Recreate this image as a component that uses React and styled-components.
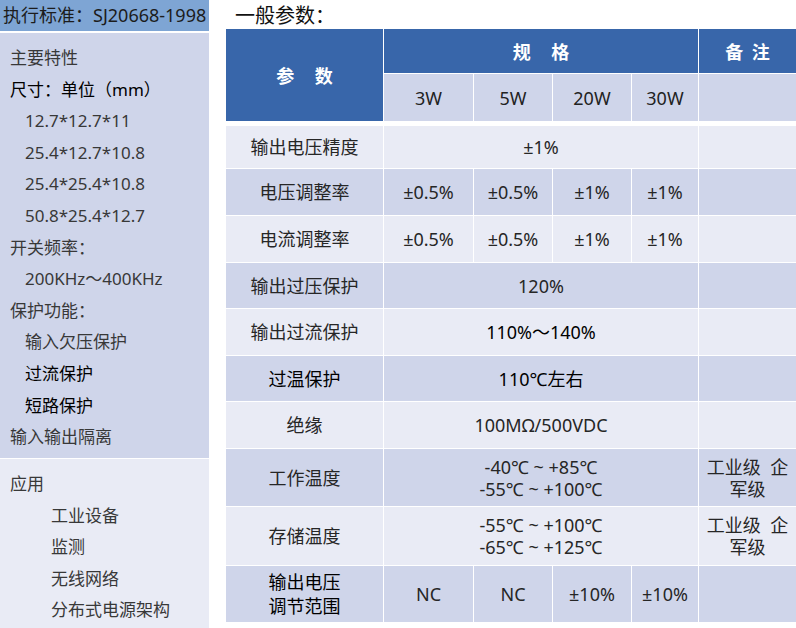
import React from "react";
import styled, { createGlobalStyle } from "styled-components";

const Global = createGlobalStyle`
  html, body { margin: 0; padding: 0; background: #ffffff; }
  body { font-family: "Noto Sans", "Noto Sans CJK SC", sans-serif; color: #222; }
`;

const Page = styled.div`
  display: flex;
  gap: 17px;
  width: 796px;
  height: 628px;
  overflow: hidden;
`;

const Side = styled.aside`
  width: 209px;
  flex: none;
  display: flex;
  flex-direction: column;
`;

const StdBar = styled.div`
  height: 31px;
  line-height: 31px;
  background: #7ea5d4;
  padding-left: 3px;
  font-size: 18px;
  color: #1c1c1c;
  white-space: nowrap;
`;

const Panel = styled.div`
  background: ${(p) => (p.$light ? "#e9ebf5" : "#cfd5ea")};
  margin-top: ${(p) => p.$mt}px;
  padding: ${(p) => p.$pt}px 0 0 0;
  height: ${(p) => p.$h}px;
  box-sizing: border-box;
  flex: ${(p) => (p.$grow ? "1" : "none")};
`;

const Line = styled.div`
  height: 31.6px;
  line-height: 31.6px;
  font-size: 17px;
  padding-left: ${(p) => p.$indent}px;
  color: ${(p) => (p.$strong ? "#000" : "#383838")};
  white-space: nowrap;
`;

const Main = styled.main`
  width: 570px;
  flex: none;
  display: flex;
  flex-direction: column;
`;

const Title = styled.h2`
  margin: 0;
  height: 29px;
  line-height: 31px;
  padding-left: 9px;
  font-size: 20px;
  font-weight: 400;
  color: #111;
`;

const cols = "157px 89px 78px 78px 66px 97px";

const Grid = styled.div`
  display: grid;
  grid-template-columns: ${cols};
  grid-template-rows: ${(p) => p.$rows};
  gap: 1px;
  background: #ffffff;
  margin-top: ${(p) => p.$mt || 0}px;
`;

const Head = styled.div`
  grid-column: ${(p) => p.$col};
  grid-row: ${(p) => p.$row};
  background: ${(p) => (p.$sub ? "#cfd5ea" : "#3866aa")};
  color: ${(p) => (p.$sub ? "#222" : "#ffffff")};
  font-size: 18px;
  font-weight: ${(p) => (p.$sub ? 400 : 700)};
  display: flex;
  align-items: center;
  justify-content: center;
  word-spacing: ${(p) => p.$ws || 0}px;
  white-space: pre;
`;

const Cell = styled.div`
  grid-column: ${(p) => p.$col || "auto"};
  background: ${(p) => (p.$dark ? "#cfd5ea" : "#e9ebf5")};
  color: ${(p) => (p.$strong ? "#000" : "#262626")};
  font-size: 18px;
  line-height: ${(p) => p.$lh || 22}px;
  display: flex;
  align-items: center;
  justify-content: center;
  text-align: center;
  white-space: pre;
  overflow: hidden;
`;

const sideMain = [
  { t: "主要特性", i: 10 },
  { t: "尺寸：单位（mm）", i: 10, s: true },
  { t: "12.7*12.7*11", i: 25 },
  { t: "25.4*12.7*10.8", i: 25 },
  { t: "25.4*25.4*10.8", i: 25 },
  { t: "50.8*25.4*12.7", i: 25 },
  { t: "开关频率：", i: 10 },
  { t: "200KHz～400KHz", i: 25 },
  { t: "保护功能：", i: 10 },
  { t: "输入欠压保护", i: 25 },
  { t: "过流保护", i: 25, s: true },
  { t: "短路保护", i: 25, s: true },
  { t: "输入输出隔离", i: 10 },
];

const sideApps = [
  { t: "应用", i: 10 },
  { t: "工业设备", i: 51 },
  { t: "监测", i: 51 },
  { t: "无线网络", i: 51 },
  { t: "分布式电源架构", i: 51 },
];

const rowHeights = [42, 46, 46, 45, 46, 45, 46, 57, 58, 56];

const body = [
  { name: "输出电压精度", span: "±1%" },
  { name: "电压调整率", vals: ["±0.5%", "±0.5%", "±1%", "±1%"] },
  { name: "电流调整率", vals: ["±0.5%", "±0.5%", "±1%", "±1%"] },
  { name: "输出过压保护", span: "120%" },
  { name: "输出过流保护", span: "110%～140%", strong: true },
  { name: "过温保护", span: "110℃左右", strong: true, nameStrong: true },
  { name: "绝缘", span: "100MΩ/500VDC" },
  { name: "工作温度", span: "-40℃ ~ +85℃\n-55℃ ~ +100℃", note: "工业级  企\n军级" },
  { name: "存储温度", span: "-55℃ ~ +100℃\n-65℃ ~ +125℃", note: "工业级  企\n军级" },
  { name: "输出电压\n调节范围", vals: ["NC", "NC", "±10%", "±10%"], nameStrong: true, lh: 24 },
];

export default function App() {
  return (
    <>
      <Global />
      <Page>
        <Side>
          <StdBar>执行标准：SJ20668-1998</StdBar>
          <Panel $mt={2} $pt={9} $h={425}>
            {sideMain.map((l, k) => (
              <Line key={k} $indent={l.i} $strong={l.s}>
                {l.t}
              </Line>
            ))}
          </Panel>
          <Panel $light $mt={1} $pt={9} $grow>
            {sideApps.map((l, k) => (
              <Line key={k} $indent={l.i}>
                {l.t}
              </Line>
            ))}
          </Panel>
        </Side>
        <Main>
          <Title>一般参数：</Title>
          <Grid $rows="44px 47px">
            <Head $col="1" $row="1 / span 2" $ws={16}>参 数</Head>
            <Head $col="2 / span 4" $row="1" $ws={16}>规 格</Head>
            <Head $col="6" $row="1" $ws={4}>备 注</Head>
            <Head $sub $col="2" $row="2">3W</Head>
            <Head $sub $col="3" $row="2">5W</Head>
            <Head $sub $col="4" $row="2">20W</Head>
            <Head $sub $col="5" $row="2">30W</Head>
            <Head $sub $col="6" $row="2"> </Head>
          </Grid>
          <Grid $mt={5} $rows={rowHeights.map((h) => h + "px").join(" ")}>
            {body.map((r, k) => {
              const dark = k % 2 === 1;
              return (
                <React.Fragment key={k}>
                  <Cell $dark={dark} $strong={r.nameStrong} $lh={r.lh}>
                    {r.name}
                  </Cell>
                  {r.span ? (
                    <Cell $dark={dark} $col="2 / span 4" $strong={r.strong}>
                      {r.span}
                    </Cell>
                  ) : (
                    r.vals.map((v, j) => (
                      <Cell key={j} $dark={dark}>
                        {v}
                      </Cell>
                    ))
                  )}
                  <Cell $dark={dark}>{r.note || ""}</Cell>
                </React.Fragment>
              );
            })}
          </Grid>
        </Main>
      </Page>
    </>
  );
}
